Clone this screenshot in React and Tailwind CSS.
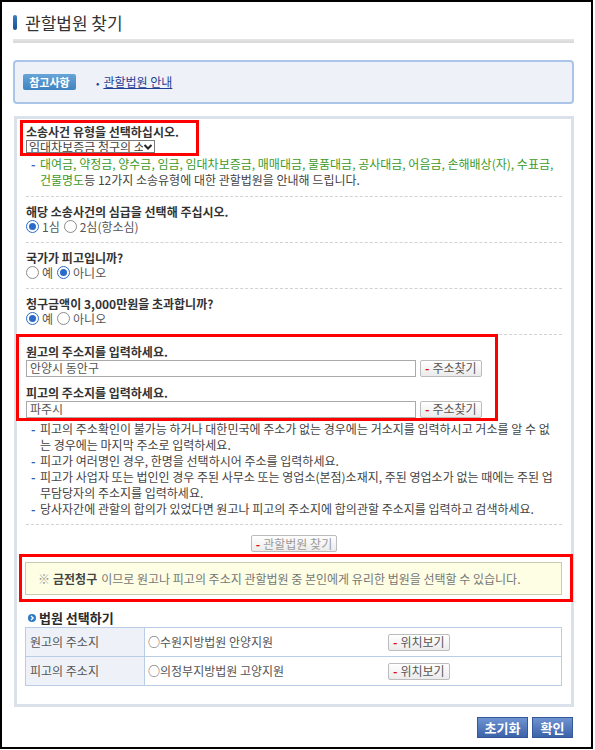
import React from "react";

function Radio({ checked }) {
  return (
    <span
      className={
        "inline-flex items-center justify-center w-[13px] h-[13px] rounded-full border bg-white " +
        (checked ? "border-[#2a6bc9] bg-[#dcebfb]" : "border-[#8c8c8c]")
      }
    >
      {checked && <span className="w-[7px] h-[7px] rounded-full bg-[#2a6bc9]" />}
    </span>
  );
}

function SmallButton({ label, muted }) {
  return (
    <span className="inline-flex items-center h-[17px] px-[4px] border border-[#bcbcbc] rounded-[2px] bg-gradient-to-b from-white to-[#ebebeb] text-[12px] leading-none whitespace-nowrap">
      <span className="text-[#e01010] font-bold mr-[3px]">-</span>
      <span className={muted ? "text-[#9a9a9a]" : "text-[#555]"}>{label}</span>
    </span>
  );
}

function Question({ title, options }) {
  return (
    <div className="pt-[8px] pb-[8px]">
      <div className="h-[14px] leading-[14px] font-bold text-[#333]">{title}</div>
      <div className="h-[15px] flex items-center text-[#555]">
        {options.map((o, i) => (
          <span key={i} className="flex items-center mr-[4px]">
            <Radio checked={o.checked} />
            <span className="ml-[3px]">{o.label}</span>
          </span>
        ))}
      </div>
    </div>
  );
}

function Dashed() {
  return <div className="border-t border-dashed border-[#d2d2d2]" />;
}

function Note({ children }) {
  return (
    <div className="flex leading-[16px]">
      <span className="w-[14px] shrink-0 pl-[5px] text-[#2f62b0] font-bold">-</span>
      <span className="text-[#444]">{children}</span>
    </div>
  );
}

function AddressInput({ value }) {
  return (
    <div className="flex items-center">
      <input
        readOnly
        value={value}
        className="w-[390px] h-[17px] border border-[#a9a9a9] px-[3px] text-[12px] text-[#555] outline-none"
      />
      <span className="ml-[4px]">
        <SmallButton label="주소찾기" />
      </span>
    </div>
  );
}

export default function App() {
  return (
    <div className="w-[593px] h-[749px] border-2 border-black bg-white pl-[11px] pr-[17px] font-['Noto_Sans_CJK_KR',sans-serif] text-[12px] text-[#333]">
      {/* Title */}
      <div className="mt-[13px] h-[15px] flex items-center gap-[8px]">
        <span className="w-[4px] h-[15px] rounded-full bg-gradient-to-b from-[#3d7cc4] to-[#1b4f94]" />
        <span className="text-[17px] leading-[15px] text-[#333]">관할법원 찾기</span>
      </div>
      <div className="mt-[9px] h-[4px] bg-gradient-to-b from-[#e6e6e6] to-[#d8d8d8]" />

      {/* Reference box */}
      <div className="mt-[17px] h-[44px] border-2 border-[#a9c6e8] rounded-[4px] bg-[#eef2f8] flex items-center pl-[8px]">
        <span className="w-[53px] h-[16px] flex items-center justify-center rounded-[2px] bg-gradient-to-b from-[#67a4d8] to-[#3f83c0] text-white text-[11px] font-bold">
          참고사항
        </span>
        <span className="ml-[20px] text-[#1e3f93] text-[10px]">•</span>
        <a className="ml-[4px] text-[#1e3f93] underline">관할법원 안내</a>
      </div>

      {/* Main box */}
      <div className="mt-[12px] ml-[1px] w-[560px] border-[3px] border-[#dbe1ea] px-[9px] pt-[1px] pb-[18px]">
        <div className="-ml-[6px] w-[179px] border-[3px] border-[#ff0000] pl-[3px] pt-[2px]">
          <div className="h-[14px] leading-[14px] font-bold text-[#333]">소송사건 유형을 선택하십시오.</div>
          <div className="mt-[1px] w-[129px] h-[13px] border border-[#7a7a7a] flex items-center bg-white overflow-hidden">
            <span className="flex-1 pl-[2px] text-[12px] leading-none text-[#444] whitespace-nowrap overflow-hidden">
              임대차보증금 청구의 소
            </span>
            <svg width="10" height="8" viewBox="0 0 10 8" className="shrink-0 mr-[1px]">
              <path d="M1.5 2 L5 5.5 L8.5 2" stroke="#222" strokeWidth="2" fill="none" />
            </svg>
          </div>
        </div>

        <div className="mb-[8px] flex leading-[16px]">
          <span className="w-[14px] shrink-0 pl-[5px] text-[#2f62b0] font-bold">-</span>
          <span className="text-[#444]">
            <span className="text-[#3c9a2a]">
              대여금, 약정금, 양수금, 임금, 임대차보증금, 매매대금, 물품대금, 공사대금, 어음금, 손해배상(자), 수표금, 건물명도
            </span>
            등 12가지 소송유형에 대한 관할법원을 안내해 드립니다.
          </span>
        </div>
        <Dashed />

        <Question
          title="해당 소송사건의 심급을 선택해 주십시오."
          options={[
            { label: "1심", checked: true },
            { label: "2심(항소심)", checked: false },
          ]}
        />
        <Dashed />
        <Question
          title="국가가 피고입니까?"
          options={[
            { label: "예", checked: false },
            { label: "아니오", checked: true },
          ]}
        />
        <Dashed />
        <Question
          title="청구금액이 3,000만원을 초과합니까?"
          options={[
            { label: "예", checked: true },
            { label: "아니오", checked: false },
          ]}
        />
        <Dashed />

        {/* Address inputs */}
        <div className="-mt-[1px] -ml-[10px] w-[482px] border-[3px] border-[#ff0000] pl-[7px] pt-[8px] bg-white">
          <div className="h-[14px] leading-[14px] font-bold text-[#333]">원고의 주소지를 입력하세요.</div>
          <AddressInput value="안양시 동안구" />
          <div className="mt-[9px] h-[14px] leading-[14px] font-bold text-[#333]">피고의 주소지를 입력하세요.</div>
          <AddressInput value="파주시" />
        </div>

        <div className="mb-[7px]">
          <Note>
            피고의 주소확인이 불가능 하거나 대한민국에 주소가 없는 경우에는 거소지를 입력하시고 거소를 알 수 없
            <br />는 경우에는 마지막 주소로 입력하세요.
          </Note>
          <Note>피고가 여러명인 경우, 한명을 선택하시어 주소를 입력하세요.</Note>
          <Note>
            피고가 사업자 또는 법인인 경우 주된 사무소 또는 영업소(본점)소재지, 주된 영업소가 없는 때에는 주된 업
            <br />무담당자의 주소지를 입력하세요.
          </Note>
          <Note>당사자간에 관할의 합의가 있었다면 원고나 피고의 주소지에 합의관할 주소지를 입력하고 검색하세요.</Note>
        </div>
        <Dashed />

        <div className="pt-[10px] flex justify-center">
          <SmallButton label="관할법원 찾기" muted />
        </div>

        {/* Notice */}
        <div className="mt-[2px] -ml-[7px] w-[554px] border-[3px] border-[#ff0000] pl-[3px] pt-[5px] pb-[4px]">
          <div className="w-[537px] h-[33px] border border-[#c9cbb0] bg-[#fdfee4] flex items-center pl-[12px] text-[#777]">
            <span className="text-[#999] mr-[3px]">※</span>
            <span className="font-bold text-[#444] mr-[4px]">금전청구</span>
            이므로 원고나 피고의 주소지 관할법원 중 본인에게 유리한 법원을 선택할 수 있습니다.
          </div>
        </div>

        {/* Court selection */}
        <div className="mt-[8px] h-[16px] flex items-center pl-[2px]">
          <svg width="8" height="8" viewBox="0 0 8 8">
            <circle cx="4" cy="4" r="4" fill="#2d7bc6" />
            <path d="M3 2 L5.2 4 L3 6" stroke="#fff" strokeWidth="1.3" fill="none" />
          </svg>
          <span className="ml-[3px] text-[13px] font-bold text-[#2b2b2b]">법원 선택하기</span>
        </div>
        <table className="mt-[1px] -ml-[1px] w-[537px] border-collapse border border-[#b9cde6]">
          <tbody>
            {[
              { label: "원고의 주소지", court: "수원지방법원 안양지원" },
              { label: "피고의 주소지", court: "의정부지방법원 고양지원" },
            ].map((r) => (
              <tr key={r.label} className="h-[29px]">
                <td className="w-[119px] border border-[#b9cde6] bg-[#eef2f8] pl-[4px] text-[#555]">{r.label}</td>
                <td className="border border-[#b9cde6] pl-[3px]">
                  <div className="flex items-center">
                    <span className="w-[240px] text-[#555] whitespace-nowrap">○{r.court}</span>
                    <SmallButton label="위치보기" />
                  </div>
                </td>
              </tr>
            ))}
          </tbody>
        </table>
      </div>

      {/* Bottom buttons */}
      <div className="mt-[10px] flex justify-end gap-[4px] pr-[1px]">
        <button className="w-[51px] h-[21px] border border-[#34579a] bg-gradient-to-b from-[#6f94d2] to-[#3c62a8] text-white text-[13px] font-bold leading-none">
          초기화
        </button>
        <button className="w-[41px] h-[21px] border border-[#34579a] bg-gradient-to-b from-[#6f94d2] to-[#3c62a8] text-white text-[13px] font-bold leading-none">
          확인
        </button>
      </div>
    </div>
  );
}
